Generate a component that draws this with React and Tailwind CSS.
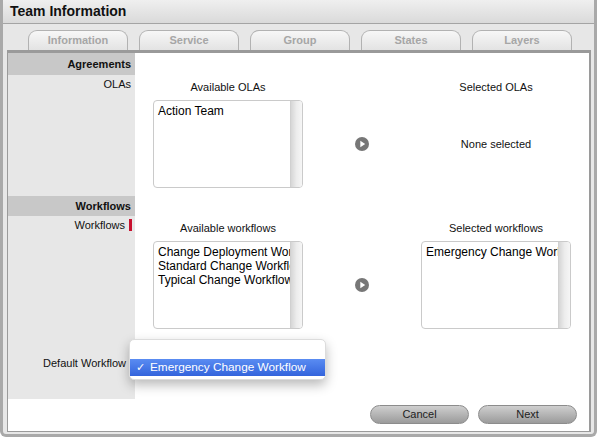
import React from "react";

const font = { fontFamily: '"Liberation Sans", Arial, sans-serif' };

function Arrow() {
  return (
    <svg width="14" height="14" viewBox="0 0 14 14">
      <circle cx="7" cy="7" r="7" fill="#777777" />
      <path d="M5.3 3.8 L10.2 7 L5.3 10.2 Z" fill="#ffffff" />
    </svg>
  );
}

function ListBox({ items }) {
  return (
    <div className="flex h-[88px] w-[150px] overflow-hidden rounded-[4px] border border-[#cacaca] bg-white">
      <div className="flex-1 overflow-hidden whitespace-nowrap pl-[4px] pt-[3px] text-[12px] leading-[14px] text-black">
        {items.map((t) => (
          <div key={t}>{t}</div>
        ))}
      </div>
      <div className="w-[12px] border-l border-[#d0d0d0] bg-gradient-to-r from-[#d6d6d6] via-[#ececec] to-[#f6f6f6]" />
    </div>
  );
}

function Picker({ pt, leftTitle, leftItems, rightTitle, rightItems, noneText }) {
  return (
    <div className={`flex flex-1 bg-white pl-[18px] ${pt}`}>
      <div className="flex w-[150px] flex-col">
        <div className="h-[14px] text-center text-[11px] leading-[14px] text-[#111]">{leftTitle}</div>
        <div className="mt-[6px]">
          <ListBox items={leftItems} />
        </div>
      </div>
      <div className="ml-[52px] flex w-[14px] flex-col">
        <div className="h-[20px]" />
        <div className="flex h-[88px] items-center">
          <Arrow />
        </div>
      </div>
      <div className="ml-[52px] flex w-[150px] flex-col">
        <div className="h-[14px] text-center text-[11px] leading-[14px] text-[#111]">{rightTitle}</div>
        <div className="mt-[6px]">
          {rightItems ? (
            <ListBox items={rightItems} />
          ) : (
            <div className="flex h-[88px] items-center justify-center text-[11px] text-[#111]">{noneText}</div>
          )}
        </div>
      </div>
    </div>
  );
}

const tabs = ["Information", "Service", "Group", "States", "Layers"];

export default function App() {
  return (
    <div className="h-[439px] w-[599px] bg-white" style={font}>
      <div className="flex h-[437px] w-[597px] flex-col rounded-b-[6px] border-x-[3px] border-b-[3px] border-[#a9a9a9] bg-[#e7e7e7]">
        <div className="flex h-[24px] items-center border-b border-[#a4a4a4] bg-gradient-to-b from-[#efefef] to-[#dadada] pl-[7px] text-[14px] font-bold text-[#111]">
          Team Information
        </div>
        <div className="flex h-[26px] gap-[11px] pl-[25px] pt-[6px]">
          {tabs.map((t) => (
            <div
              key={t}
              className="flex h-[20px] w-[100px] items-center justify-center rounded-t-[9px] border border-b-0 border-[#b2b2b2] bg-gradient-to-b from-[#f7f7f7] to-[#e3e3e3] text-[11px] font-bold text-[#a6a6a6]"
            >
              {t}
            </div>
          ))}
        </div>
        <div className="ml-[4px] mr-[3px] flex h-[382px] flex-col border-b border-l border-r-2 border-t-[3px] border-[#9a9a9a] bg-white">
          <div className="flex h-[143px]">
            <div className="flex w-[127px] flex-col bg-[#e7e7e7]">
              <div className="h-[22px] bg-[#c8c8c8] pr-[4px] text-right text-[11px] font-bold leading-[22px] text-[#111]">
                Agreements
              </div>
              <div className="mt-[2px] pr-[4px] text-right text-[11px] leading-[14px] text-[#111]">OLAs</div>
            </div>
            <Picker
              pt="pt-[27px]"
              leftTitle="Available OLAs"
              leftItems={["Action Team"]}
              rightTitle="Selected OLAs"
              noneText="None selected"
            />
          </div>
          <div className="flex h-[143px]">
            <div className="flex w-[127px] flex-col bg-[#e7e7e7]">
              <div className="h-[20px] bg-[#c8c8c8] pr-[4px] text-right text-[11px] font-bold leading-[20px] text-[#111]">
                Workflows
              </div>
              <div className="mt-[2px] flex h-[14px] items-center justify-end gap-[4px] pr-[3px]">
                <span className="text-[11px] leading-[14px] text-[#111]">Workflows</span>
                <span className="h-[12px] w-[3px] bg-[#c8102e]" />
              </div>
            </div>
            <Picker
              pt="pt-[25px]"
              leftTitle="Available workflows"
              leftItems={["Change Deployment Workflow", "Standard Change Workflow", "Typical Change Workflow"]}
              rightTitle="Selected workflows"
              rightItems={["Emergency Change Workflow"]}
            />
          </div>
          <div className="relative flex h-[60px]">
            <div className="w-[127px] bg-[#e7e7e7] pr-[9px] pt-[17px] text-right text-[11px] leading-[14px] text-[#111]">
              Default Workflow
            </div>
            <div className="flex-1 bg-white" />
            <div className="absolute left-[121px] top-0 flex h-[41px] w-[197px] flex-col rounded-[5px] border border-[#dcdcdc] bg-white shadow-[0_5px_12px_rgba(0,0,0,0.28)]">
              <div className="h-[19px]" />
              <div className="flex h-[17px] items-center bg-gradient-to-b from-[#5a8cf2] to-[#3464dc] text-[11.8px] text-white">
                <span className="w-[20px] pl-[6px] text-[11px]">✓</span>
                <span>Emergency Change Workflow</span>
              </div>
            </div>
          </div>
          <div className="flex h-[32px] justify-end gap-[9px] pr-[12px] pt-[6px]">
            <div className="flex h-[19px] w-[99px] items-center justify-center rounded-full border border-[#8c8c8c] bg-gradient-to-b from-[#cfcfcf] to-[#9b9b9b] text-[11px] text-[#222]">
              Cancel
            </div>
            <div className="flex h-[19px] w-[99px] items-center justify-center rounded-full border border-[#8c8c8c] bg-gradient-to-b from-[#cfcfcf] to-[#9b9b9b] text-[11px] text-[#222]">
              Next
            </div>
          </div>
        </div>
      </div>
    </div>
  );
}
